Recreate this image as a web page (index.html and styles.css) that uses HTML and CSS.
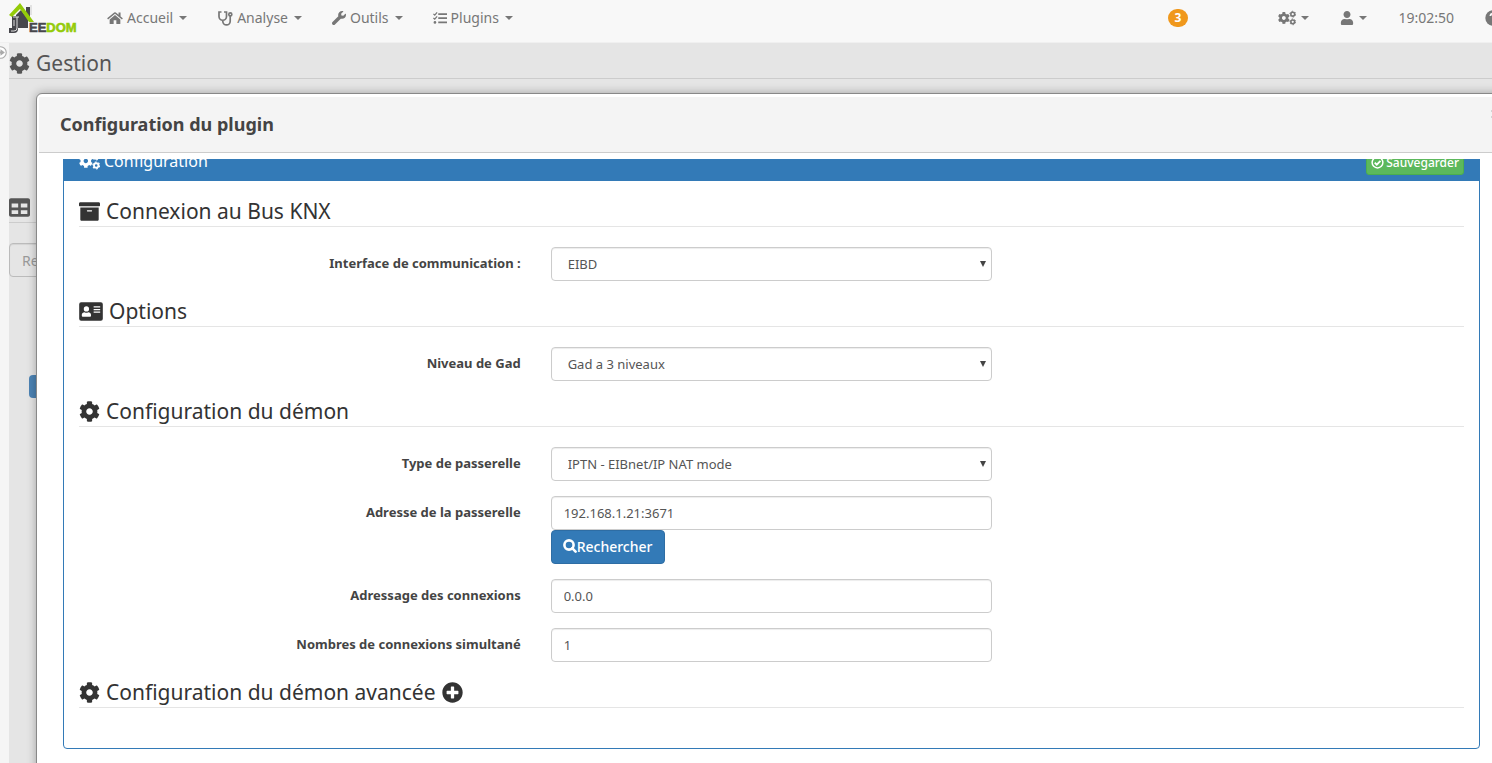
FILE: index.html
```html
<!DOCTYPE html>
<html lang="fr">
<head>
<meta charset="utf-8">
<title>Jeedom - Configuration du plugin</title>
<link rel="stylesheet" href="styles.css">
</head>
<body>
<svg class="sprite" aria-hidden="true">
  <symbol id="cog" viewBox="0 0 512 512"><path d="M487.4 315.7l-42.6-24.6c4.3-23.2 4.3-47 0-70.2l42.6-24.6c4.9-2.8 7.1-8.6 5.5-14-11.1-35.6-30-67.8-54.7-94.6-3.8-4.1-10-5.1-14.8-2.3L380.8 110c-17.9-15.4-38.5-27.3-60.8-35.1V25.8c0-5.6-3.9-10.5-9.4-11.7-36.7-8.2-74.3-7.8-109.2 0-5.5 1.2-9.4 6.1-9.4 11.7V75c-22.2 7.9-42.8 19.8-60.8 35.1L88.7 85.5c-4.9-2.8-11-1.9-14.8 2.3-24.7 26.7-43.6 58.9-54.7 94.6-1.7 5.4.6 11.2 5.5 14L67.3 221c-4.3 23.2-4.3 47 0 70.2l-42.6 24.6c-4.9 2.8-7.1 8.6-5.5 14 11.1 35.6 30 67.8 54.7 94.6 3.8 4.1 10 5.1 14.8 2.3l42.6-24.6c17.9 15.4 38.5 27.3 60.8 35.1v49.2c0 5.6 3.9 10.5 9.4 11.7 36.7 8.2 74.3 7.8 109.2 0 5.5-1.2 9.4-6.1 9.4-11.7v-49.2c22.2-7.9 42.8-19.8 60.8-35.1l42.6 24.6c4.9 2.8 11 1.9 14.8-2.3 24.7-26.7 43.6-58.9 54.7-94.6 1.5-5.5-.7-11.3-5.6-14.1zM256 336c-44.1 0-80-35.9-80-80s35.9-80 80-80 80 35.9 80 80-35.9 80-80 80z"/></symbol>
  <symbol id="cogs" viewBox="0 0 640 512"><use href="#cog" x="-8" y="40" width="432" height="432"/><g fill="none" stroke="currentColor"><circle cx="524" cy="120" r="68" stroke-width="56"/><circle cx="524" cy="120" r="104" stroke-width="34" stroke-dasharray="54 55"/><circle cx="524" cy="392" r="68" stroke-width="56"/><circle cx="524" cy="392" r="104" stroke-width="34" stroke-dasharray="54 55"/></g></symbol>
  <symbol id="archive" viewBox="0 0 512 512"><path d="M32 448c0 17.7 14.3 32 32 32h384c17.7 0 32-14.3 32-32V160H32v288zm160-212c0-6.6 5.4-12 12-12h104c6.6 0 12 5.4 12 12v8c0 6.6-5.4 12-12 12H204c-6.6 0-12-5.4-12-12v-8zM480 32H32C14.3 32 0 46.3 0 64v48c0 8.8 7.2 16 16 16h480c8.8 0 16-7.2 16-16V64c0-17.7-14.3-32-32-32z"/></symbol>
  <symbol id="card" viewBox="0 0 576 512"><path fill-rule="evenodd" d="M48 32h480a48 48 0 0 1 48 48v352a48 48 0 0 1-48 48H48a48 48 0 0 1-48-48V80a48 48 0 0 1 48-48zM176 128a64 64 0 1 0 0 128 64 64 0 0 0 0-128zM131 272c-37 0-67 28-67 62v31c0 10 10 19 22 19h180c12 0 22-9 22-19v-31c0-34-30-62-67-62-17 10-33 16-45 16s-28-6-45-16zM352 128v32h160v-32zM352 192v32h160v-32zM352 256v32h160v-32z"/></symbol>
  <symbol id="plus" viewBox="0 0 512 512"><path d="M256 8C119 8 8 119 8 256s111 248 248 248 248-111 248-248S393 8 256 8zm144 276c0 6.600-5.400 12-12 12h-92v92c0 6.600-5.400 12-12 12h-56c-6.600 0-12-5.400-12-12v-92h-92c-6.600 0-12-5.400-12-12v-56c0-6.600 5.400-12 12-12h92v-92c0-6.600 5.400-12 12-12h56c6.600 0 12 5.400 12 12v92h92c6.600 0 12 5.400 12 12v56z"/></symbol>
  <symbol id="table" viewBox="0 0 512 512"><path d="M464 32H48C21.490 32 0 53.490 0 80v352c0 26.510 21.490 48 48 48h416c26.510 0 48-21.490 48-48V80c0-26.510-21.490-48-48-48zM224 416H64v-96h160v96zm0-160H64v-96h160v96zm224 160H288v-96h160v96zm0-160H288v-96h160v96z"/></symbol>
  <symbol id="user" viewBox="0 0 448 512"><path d="M224 256c70.700 0 128-57.300 128-128S294.700 0 224 0 96 57.300 96 128s57.300 128 128 128zm89.600 32h-16.700c-22.200 10.200-46.900 16-72.900 16s-50.600-5.800-72.900-16h-16.700C60.200 288 0 348.200 0 422.400V464c0 26.500 21.500 48 48 48h352c26.500 0 48-21.500 48-48v-41.600c0-74.200-60.200-134.400-134.400-134.400z"/></symbol>
  <symbol id="wrench" viewBox="0 0 512 512"><path d="M507.730 109.100c-2.240-9.030-13.540-12.090-20.120-5.510l-74.360 74.360-67.880-11.310-11.310-67.880 74.360-74.360c6.620-6.620 3.430-17.900-5.660-20.160-47.380-11.740-99.550.910-136.580 37.930-39.640 39.640-50.550 97.100-34.050 147.200L18.740 402.760c-24.990 24.990-24.990 65.510 0 90.500 24.990 24.990 65.510 24.990 90.500 0l213.210-213.210c50.120 16.710 107.470 5.680 147.370-34.220 37.070-37.070 49.700-89.320 37.910-136.730z"/></symbol>
  <symbol id="home" viewBox="0 0 576 512"><path d="M288 150 96 308v152a16 16 0 0 0 16 16h128V340h96v136h128a16 16 0 0 0 16-16V308z"/><path d="M488 200V56h-72v84L318 60a48 48 0 0 0-60 0L6 266l32 40 250-206 250 206 32-40z"/></symbol>
  <symbol id="steth" viewBox="0 0 16 16"><g fill="none" stroke="currentColor" stroke-width="1.700"><path d="M4.500 2H2v4.500a3.500 3.500 0 0 0 7.500 0V2H7M5.800 10.200v1a3.700 3.700 0 0 0 7.400 0V6"/><circle cx="13.300" cy="4.400" r="1.500"/></g></symbol>
  <symbol id="tasks" viewBox="0 0 16 16"><path d="M6 2.500h10v2H6zM6 7.200h10v2H6zM6 12h10v2H6z"/><path d="M.5 3.300 2 4.700 4.700 1.500M.5 8 2 9.400 4.700 6.200" fill="none" stroke="currentColor" stroke-width="1.400"/><circle cx="2.200" cy="13" r="1.500"/></symbol>
  <symbol id="search" viewBox="0 0 14 14"><g fill="none" stroke="currentColor" stroke-width="2.600"><circle cx="6" cy="6" r="4.600"/><path d="m9.200 9.200 3.400 3.400" stroke-linecap="round"/></g></symbol>
  <symbol id="check" viewBox="0 0 14 14"><g fill="none" stroke="currentColor"><circle cx="7" cy="7" r="5.800" stroke-width="1.600"/><path d="m4 7.200 2.200 2.200 4-4.200" stroke-width="2"/></g></symbol>
  <symbol id="help" viewBox="0 0 16 16"><circle cx="8" cy="8" r="7.700"/><path d="M5.400 6c.2-3.400 5.500-3.100 5.200-.2C10.400 7.500 8.200 7.500 8 9.500M8 11v2" fill="none" stroke="#f8f8f8" stroke-width="2"/></symbol>
</svg>

<header class="navbar">
  <a class="brand" href="#" aria-label="Jeedom">
    <svg width="70" height="32" viewBox="0 0 70 32">
      <path d="M17 4h4v12h-4z" fill="#47474c"/>
      <path d="M22 2v10" stroke="#ccc"/>
      <path d="m7 12 5-5 7 9v9H7z" fill="#47474c"/>
      <path d="M3 13h6v13q0 4-4 4H0v-5h3z" fill="#47474c"/>
      <path d="M8 14v11q0 3-3 3H2M4 14h6M5 17v6" fill="none" stroke="#ddd"/>
      <path d="M11 0 0 12l3 2 8-8 9 13h5z" fill="#94cb09"/>
      <text x="20" y="29" class="logo-text"><tspan class="logo-dark">EE</tspan><tspan class="logo-green">DOM</tspan></text>
    </svg>
  </a>
  <nav class="menu">
    <a class="item" href="#"><svg class="icon-nav"><use href="#home"/></svg>Accueil<span class="caret"></span></a>
    <a class="item" href="#"><svg class="icon-nav"><use href="#steth"/></svg>Analyse<span class="caret"></span></a>
    <a class="item" href="#"><svg class="icon-small"><use href="#wrench"/></svg>Outils<span class="caret"></span></a>
    <a class="item" href="#"><svg class="icon-small"><use href="#tasks"/></svg>Plugins<span class="caret"></span></a>
  </nav>
  <nav class="tools">
    <a class="badge" href="#">3</a>
    <a class="item" href="#" aria-label="Réglages"><svg class="icon-cogs"><use href="#cogs"/></svg><span class="caret"></span></a>
    <a class="item" href="#" aria-label="Utilisateur"><svg class="icon-small"><use href="#user"/></svg><span class="caret"></span></a>
    <span class="item">19:02:50</span>
    <a class="item" href="#" aria-label="Aide"><svg class="icon-nav"><use href="#help"/></svg></a>
  </nav>
</header>

<div class="page">
  <aside class="rail"><svg class="rail-toggle" viewBox="0 0 12 12"><circle cx="6" cy="6" r="5.300" fill="#fff" stroke="#aaa"/><path d="M3 5h3V3l4 3-4 3V7H3z" fill="#aaa"/></svg></aside>
  <main class="main">
    <h1 class="legend legend-main"><svg class="icon-lg"><use href="#cog"/></svg>Gestion</h1>
    <div class="legend legend-table"><svg class="icon-lg"><use href="#table"/></svg></div>
    <input class="control search" type="text" placeholder="Rechercher" aria-label="Rechercher">
    <div class="plugin-tag"></div>
  </main>
</div>

<section class="dialog" role="dialog" aria-labelledby="dialog-title">
  <header class="dialog-title">
    <h2 id="dialog-title">Configuration du plugin</h2>
    <button class="close" aria-label="Fermer"><svg width="12" height="12" viewBox="0 0 12 12"><path d="m2 2 8 8M2 10l8-8" stroke="#bbb" stroke-width="3"/></svg></button>
  </header>
  <div class="dialog-body">
    <div class="panel">
      <div class="panel-heading">
        <h3><svg class="icon-head"><use href="#cogs"/></svg>Configuration</h3>
        <button class="save"><svg class="icon-save"><use href="#check"/></svg>Sauvegarder</button>
      </div>
      <form class="panel-body">
        <h4 class="legend"><svg class="icon-lg"><use href="#archive"/></svg>Connexion au Bus KNX</h4>
        <div class="row">
          <label for="interface">Interface de communication :</label>
          <div class="select"><select class="control" id="interface"><option>EIBD</option></select></div>
        </div>
        <h4 class="legend"><svg class="icon-card"><use href="#card"/></svg>Options</h4>
        <div class="row">
          <label for="gad">Niveau de Gad</label>
          <div class="select"><select class="control" id="gad"><option>Gad a 3 niveaux</option></select></div>
        </div>
        <h4 class="legend"><svg class="icon-lg"><use href="#cog"/></svg>Configuration du démon</h4>
        <div class="row">
          <label for="type">Type de passerelle</label>
          <div class="select"><select class="control" id="type"><option>IPTN - EIBnet/IP NAT mode</option></select></div>
        </div>
        <div class="row">
          <label for="adresse">Adresse de la passerelle</label>
          <div><input class="control" id="adresse" type="text" value="192.168.1.21:3671"><button class="find" type="button"><svg class="icon-find"><use href="#search"/></svg>Rechercher</button></div>
        </div>
        <div class="row">
          <label for="adressage">Adressage des connexions</label>
          <div><input class="control" id="adressage" type="text" value="0.0.0"></div>
        </div>
        <div class="row">
          <label for="nombre">Nombres de connexions simultané</label>
          <div><input class="control" id="nombre" type="text" value="1"></div>
        </div>
        <h4 class="legend"><svg class="icon-lg"><use href="#cog"/></svg>Configuration du démon avancée<svg class="icon-lg"><use href="#plus"/></svg></h4>
      </form>
    </div>
  </div>
</section>
</body>
</html>
```
FILE: styles.css
```css
* { box-sizing: border-box; }

body {
  margin: 0;
  min-height: 100vh;
  display: flex;
  flex-direction: column;
  overflow: hidden;
  background: #e5e5e5;
  color: #333;
  font-family: "Noto Sans", sans-serif;
  font-size: 14px;
  line-height: 20px;
}

svg { flex: none; fill: currentColor; }
button, input, select { font-family: inherit; }
h1, h2, h3, h4 { margin: 0; font-weight: 400; }
.sprite { position: absolute; width: 0; height: 0; }

/* Top bar */
.navbar {
  display: flex;
  height: 43px;
  padding-left: 9px;
  background: #f8f8f8;
  border-bottom: 1px solid #f0f0f0;
}
.brand { padding-top: 3px; width: 83px; }
.logo-text { font: bold 13px "Liberation Sans", sans-serif; }
.logo-dark { fill: #47474c; stroke: #47474c; stroke-width: .6px; }
.logo-green { fill: #94cb09; stroke: #94cb09; stroke-width: .6px; }
.menu, .tools { display: flex; align-items: center; height: 36px; }
.tools { margin-left: auto; margin-right: -24px; }
.item {
  display: flex;
  align-items: center;
  gap: 4px;
  padding: 0 15px;
  color: #777;
  text-decoration: none;
}
.caret {
  margin-left: 2px;
  border: 4px solid transparent;
  border-top-color: #777;
  border-bottom: 0;
}
.tools .item { padding: 0 15px 0 16px; }
.tools .caret { margin-left: 1px; }
.badge {
  margin-right: 74px;
  padding: 0 7px;
  border-radius: 10px;
  background: #f0981c;
  color: #fff;
  font-size: 12px;
  font-weight: 700;
  line-height: 18px;
  text-decoration: none;
}
.icon-nav { width: 16px; height: 16px; }
.icon-small { width: 14px; height: 14px; }
.icon-cogs { width: 18px; height: 16px; }

/* Page behind the dialog */
.page { display: flex; flex: 1; }
.rail { width: 9px; background: #f5f5f5; overflow: hidden; }
.rail-toggle { display: block; width: 13px; height: 13px; margin: 3px 0 0 -6px; }
.main { flex: 1; padding-top: 5px; color: #555; }

.legend {
  display: flex;
  align-items: center;
  gap: 6px;
  height: 31px;
  margin-bottom: 20px;
  border-bottom: 1px solid #e5e5e5;
  font-size: 21px;
  line-height: 30px;
}
.legend-main { margin-bottom: 113px; border-color: #ccc; }
.legend-table { border-color: #ccc; }
.icon-lg { width: 21px; height: 21px; }
.icon-card { width: 24px; height: 21px; }

.control {
  display: block;
  width: 100%;
  height: 34px;
  padding: 6px 12px;
  border: 1px solid #ccc;
  border-radius: 4px;
  background: #fff;
  box-shadow: inset 0 1px 1px rgba(0, 0, 0, .075);
  color: #555;
  font-size: 13px;
}
.search { width: 200px; background: #e5e5e5; border-color: #bbb; font-size: 14px; }
.search::placeholder { color: #999; }
.plugin-tag { width: 80px; height: 23px; margin: 98px 0 0 20px; border-radius: 4px; background: #4c83b4; }

/* Dialog, partly beyond the right edge of the window */
.dialog {
  position: absolute;
  top: 93px;
  left: 36px;
  right: -21px;
  bottom: -20px;
  padding: 3px 2px;
  border: 1px solid #888;
  border-radius: 6px;
  background: #fff;
  box-shadow: 0 0 10px rgba(0, 0, 0, .3);
}
.dialog-title {
  display: flex;
  align-items: center;
  justify-content: space-between;
  height: 56px;
  padding: 0 8px 2px 21px;
  border-bottom: 1px solid #ccc;
  background: #f4f4f4;
}
.dialog-title h2 { font-size: 18px; font-weight: 700; color: #444; }
.close { padding: 0 0 18px; border: 0; background: none; line-height: 12px; }
.dialog-body { margin-top: 6px; padding: 0 30px 0 24px; overflow: hidden; }

/* The body is scrolled past the top of the panel */
.panel { margin-top: -20px; border: 1px solid #337ab7; border-radius: 4px; }
.panel-heading {
  display: flex;
  align-items: center;
  justify-content: space-between;
  height: 41px;
  padding: 0 15px;
  background: #337ab7;
  color: #fff;
}
.panel-heading h3 { display: flex; align-items: center; gap: 4px; font-size: 16px; }
.icon-head { width: 21px; height: 18px; }
.save, .find { display: flex; align-items: center; border: 1px solid; color: #fff; font-weight: 500; }
.save {
  gap: 2px;
  height: 22px;
  margin-top: 6px;
  padding: 0 4px 2px;
  border-color: #4cae4c;
  border-radius: 3px;
  background: #5cb85c;
  font-size: 12px;
}
.icon-save { width: 13px; height: 13px; }
.panel-body { padding: 15px 15px 20px; }
.row {
  display: grid;
  grid-template-columns: repeat(3, 1fr);
  gap: 30px;
  margin-bottom: 15px;
}
.row label { padding-top: 7px; text-align: right; color: #444; font-size: 13px; font-weight: 700; line-height: 19px; }
.select { position: relative; }
.select::after {
  content: "";
  position: absolute;
  top: 14px;
  right: 6px;
  border: 3px solid transparent;
  border-top: 6px solid #444;
  border-bottom: 0;
  pointer-events: none;
}
.select .control { padding: 0 16px; appearance: none; }
.find {
  height: 34px;
  padding: 0 12px 2px 11px;
  border-color: #2e6da4;
  border-radius: 4px;
  background: #337ab7;
  font-size: 14px;
}
.icon-find { width: 14px; height: 14px; }
```
